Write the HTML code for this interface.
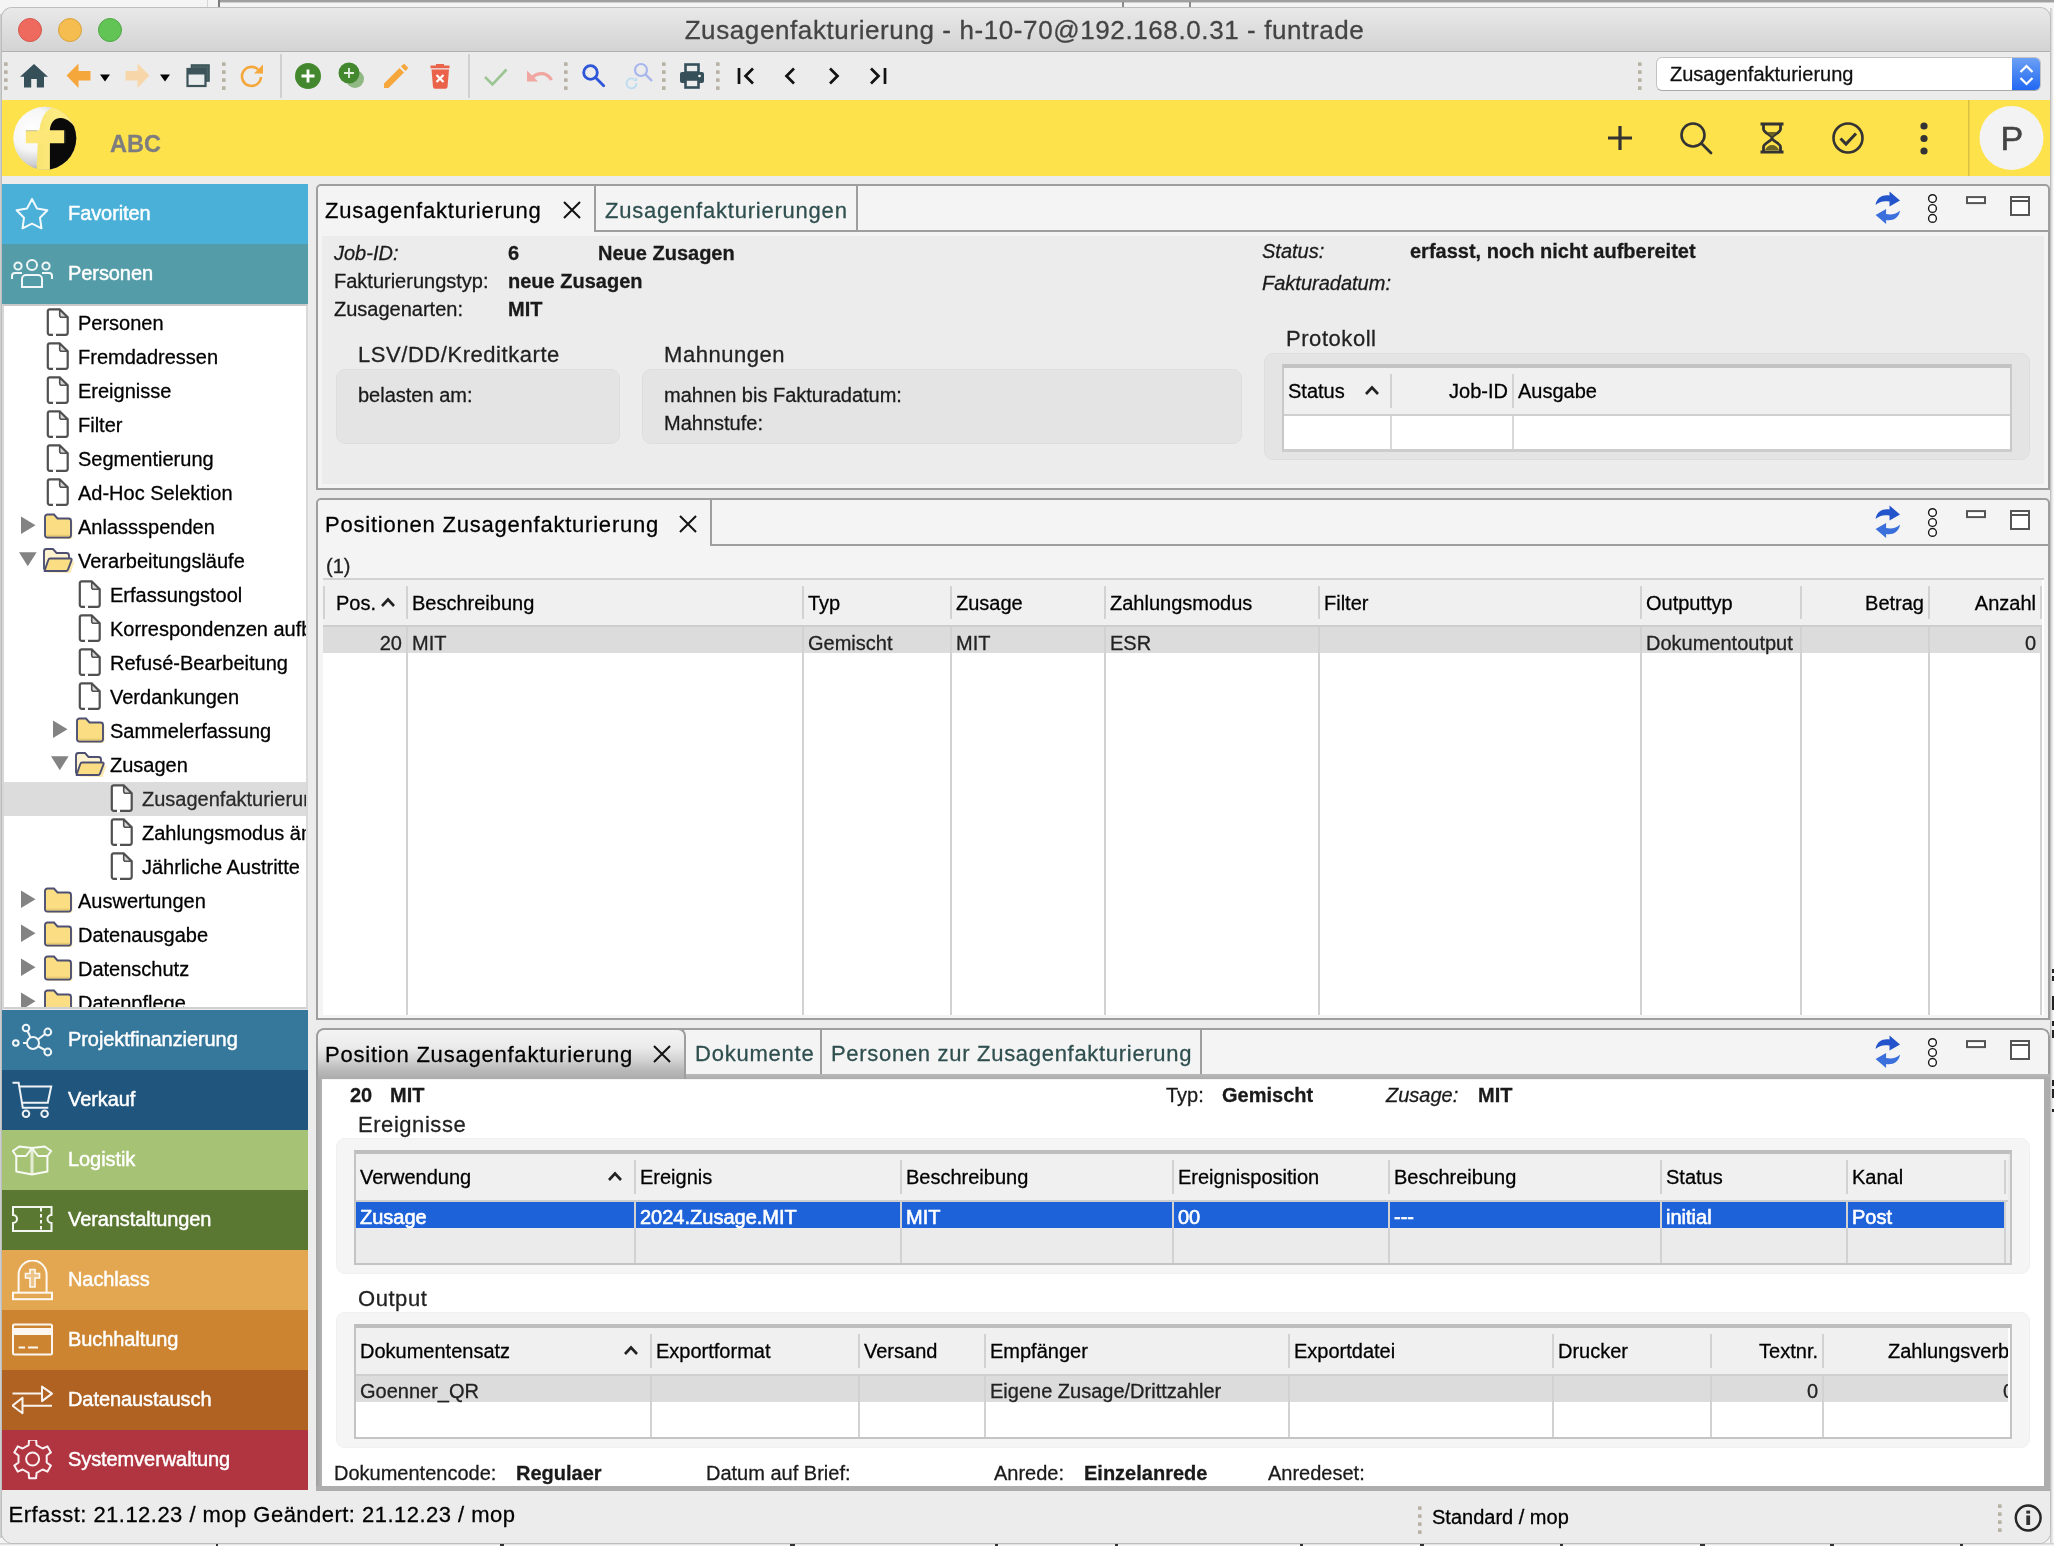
<!DOCTYPE html>
<html lang="de">
<head>
<meta charset="utf-8">
<title>Zusagenfakturierung</title>
<style>
*{box-sizing:border-box;margin:0;padding:0}
html,body{width:2054px;height:1546px;overflow:hidden;background:#f2f2f2}
body{position:relative;font-family:"Liberation Sans",sans-serif;font-size:20px;color:#000}
#desk{position:absolute;left:0;top:0;width:2054px;height:1546px;background:#f4f4f4}
#win{position:absolute;left:2px;top:8px;width:2048px;height:1535px;background:#ececec;border-radius:10px 10px 11px 11px;overflow:hidden}
#winb{position:absolute;left:1px;top:7px;width:2050px;height:1537px;border-radius:11px 11px 12px 12px;background:#bdbdbd}
#o{position:absolute;left:-2px;top:-8px;width:2054px;height:1546px;will-change:transform;-webkit-text-stroke:.28px}
#o div,#o span,#o svg{position:absolute}

/* title */
#title{left:2px;top:8px;width:2048px;height:44px;background:linear-gradient(#e9e9e9,#d3d3d3);border-bottom:1px solid #b1b1b1}
#title .t{left:-1.500px;width:2048px;top:7px;text-align:center;font-size:26px;color:#444;letter-spacing:.6px;white-space:nowrap}
.tl{top:10px;width:24px;height:24px;border-radius:12px}
#tool{left:2px;top:52px;width:2048px;height:48px;background:#ececec}
#banner{left:2px;top:100px;width:2048px;height:76px;background:#fde24b}
/* sidebar */
.nav{left:2px;width:306px;height:60px;color:#fff;font-size:20px;white-space:nowrap}
.nav span{left:66px;top:18px;-webkit-text-stroke:.45px #fff;letter-spacing:-.08px}
#tree{left:2px;top:304px;width:306px;height:705px;background:#fff;overflow:hidden;border-left:2px solid #d6d6d6;border-right:2px solid #d9d9d9;border-bottom:2px solid #d0d0d0;border-top:2px solid #cbc8c8}
.tr{left:-4px;height:34px;width:320px;white-space:nowrap;font-size:20px;line-height:34px}
.tr span{top:0}
.tr svg{top:0}
/* panels */
.panel{background:#f4f4f4;border:2px solid #9e9e9e;border-radius:5px 5px 0 0}
.tab{top:0;height:46px;white-space:nowrap;font-size:22px;letter-spacing:.78px;line-height:46px}
.lbl{white-space:nowrap;font-size:20px;line-height:28px;color:#1a1a1a}
.b{font-weight:bold}
.i{font-style:italic}
.gt{margin-top:1px;white-space:nowrap;font-size:22px;letter-spacing:.55px;color:#222;line-height:28px}
.grp{background:#e4e4e4;border:1px solid #dedede;border-radius:9px}
.th{white-space:nowrap;font-size:20px;line-height:28px;color:#000}
.td{white-space:nowrap;font-size:20px;line-height:26px;color:#222}
.vs{width:2px;background:#d2d2d2}
.r{text-align:right}
.w{color:#fff!important;-webkit-text-stroke:.6px #fff}
#status{left:2px;top:1491px;width:2048px;height:53px;background:#ececec}
</style>
</head>
<body>
<div id="desk">
 <div style="position:absolute;left:220px;top:0;width:1834px;height:2px;background:#9f9f9f"></div>
 <div style="position:absolute;left:220px;top:2px;width:1834px;height:1px;background:#d0d0d0"></div>
 <div style="position:absolute;left:207px;top:0;width:1px;height:8px;background:#d6d6d6"></div>
 <div style="position:absolute;left:218px;top:0;width:2px;height:8px;background:#7c7c7c"></div>
 <div style="position:absolute;left:1122px;top:2px;width:2px;height:5px;background:#8a8a8a"></div>
 <div style="position:absolute;left:1189px;top:2px;width:2px;height:5px;background:#8a8a8a"></div>
 <div style="position:absolute;left:0;top:14px;width:2px;height:1524px;background:#cbcfcf"></div>
 <div style="position:absolute;left:2050px;top:8px;width:4px;height:1538px;background:linear-gradient(90deg,#c6c6c6,#e9e9e9 60%,#fff)"></div>
 <div style="position:absolute;left:0;top:1543px;width:2054px;height:3px;background:linear-gradient(#c9c9c9,#fff)"></div>
 <div style="position:absolute;left:2051.500px;top:969px;width:2.500px;height:4px;background:#222"></div>
 <div style="position:absolute;left:2051.500px;top:976px;width:2.500px;height:5px;background:#222"></div>
 <div style="position:absolute;left:2051.500px;top:996px;width:2.500px;height:14px;background:#222"></div>
 <div style="position:absolute;left:2051.500px;top:1021px;width:2.500px;height:5px;background:#222"></div>
 <div style="position:absolute;left:2051.500px;top:1030px;width:2.500px;height:8px;background:#222"></div>
 <div style="position:absolute;left:2051.500px;top:1080px;width:2.500px;height:6px;background:#222"></div>
 <div style="position:absolute;left:2051.500px;top:1089px;width:2.500px;height:9px;background:#222"></div>
 <div style="position:absolute;left:2051.500px;top:1109px;width:2.500px;height:3px;background:#222"></div>
 <div style="position:absolute;left:216px;top:1544px;width:2px;height:2px;background:#333"></div>
 <div style="position:absolute;left:500px;top:1544px;width:4px;height:2px;background:#333"></div>
 <div style="position:absolute;left:790px;top:1544px;width:5px;height:2px;background:#333"></div>
 <div style="position:absolute;left:995px;top:1544px;width:3px;height:2px;background:#333"></div>
 <div style="position:absolute;left:1115px;top:1544px;width:3px;height:2px;background:#333"></div>
 <div style="position:absolute;left:1300px;top:1544px;width:3px;height:2px;background:#333"></div>
 <div style="position:absolute;left:1420px;top:1544px;width:4px;height:2px;background:#333"></div>
 <div style="position:absolute;left:1560px;top:1544px;width:3px;height:2px;background:#333"></div>
 <div style="position:absolute;left:1700px;top:1544px;width:5px;height:2px;background:#333"></div>
 <div style="position:absolute;left:1830px;top:1544px;width:4px;height:2px;background:#333"></div>
 <div style="position:absolute;left:1960px;top:1544px;width:3px;height:2px;background:#333"></div>
</div>
<div id="winb"></div>
<div id="win"><div id="o">
<!--TITLE-->
<div id="title">
 <div class="tl" style="left:16px;background:#ee6a5f;border:1px solid #d5564c"></div>
 <div class="tl" style="left:56px;background:#f5bd4f;border:1px solid #d9a33d"></div>
 <div class="tl" style="left:96px;background:#61c454;border:1px solid #50a846"></div>
 <div class="t">Zusagenfakturierung - h-10-70@192.168.0.31 - funtrade</div>
</div>
<div id="tool"></div>
<div id="banner"></div>
<!-- toolbar -->
<svg style="left:0;top:52px" width="2054" height="48" viewBox="0 52 2054 48">
 <defs>
  <g id="hdl"><rect x="0" y="0.300" width="3.600" height="3.600" fill="#b7b2a4"/><rect x="0" y="8.300" width="3.600" height="3.600" fill="#b7b2a4"/><rect x="0" y="16.300" width="3.600" height="3.600" fill="#b7b2a4"/><rect x="0" y="24.300" width="3.600" height="3.600" fill="#b7b2a4"/></g>
 </defs>
 <use href="#hdl" x="4" y="62"/>
 <!-- home -->
 <path d="M34 64l-14 12.700h4v10.800h7.200v-8.500h5.600v8.500h7.200v-10.800h4z" fill="#36505a"/>
 <!-- back -->
 <path d="M66.500 75.500l12-12v7.500h12v9.500h-12v7.500z" fill="#f5a73b"/>
 <path d="M100 74.500h10l-5 7z" fill="#000"/>
 <!-- forward -->
 <path d="M149.500 75.500l-12-12v7.500h-12v9.500h12v7.500z" fill="#f7d6a9"/>
 <path d="M160 74.500h10l-5 7z" fill="#000"/>
 <!-- windows -->
 <rect x="191.500" y="65" width="17.500" height="16" fill="#4a6166" stroke="#3c5459" stroke-width="1.600"/>
 <rect x="187.500" y="69" width="18" height="17" fill="#e8ecec" stroke="#3c5459" stroke-width="2.200"/>
 <rect x="187" y="68.500" width="19" height="6" fill="#3c5459"/>
 <use href="#hdl" x="222" y="62"/>
 <!-- refresh -->
 <path d="M261 77a9.500 9.500 0 1 1-3-7.500" fill="none" stroke="#f5a73b" stroke-width="2.600"/>
 <path d="M263 64.500v9h-9z" fill="#f5a73b"/>
 <rect x="280" y="54" width="2" height="44" fill="#d0d0d0"/>
 <!-- add -->
 <circle cx="308" cy="76" r="13" fill="#43882f"/>
 <path d="M308 69.500v13M301.500 76h13" stroke="#fff" stroke-width="2.800"/>
 <!-- add copy -->
 <circle cx="355" cy="79" r="9" fill="#8fb883"/>
 <circle cx="349" cy="73" r="10.500" fill="#43882f"/>
 <path d="M349 68v10M344 73h10" stroke="#e6f0e2" stroke-width="1.800"/>
 <!-- pencil -->
 <path d="M384 83.500l15.500-15.500 4.500 4.500-15.500 15.500h-4.500z" fill="#f5a73b"/>
 <path d="M401 66.500l2-2a1.500 1.500 0 0 1 2 0l2.500 2.500a1.500 1.500 0 0 1 0 2l-2 2z" fill="#f5a73b"/>
 <!-- trash -->
 <path d="M431.500 69.500h17.500l-1.500 17.500a2 2 0 0 1-2 1.800h-10.500a2 2 0 0 1-2-1.800z" fill="#ea6249"/>
 <path d="M430.500 65.500h19v2.800h-19zM436 64h8v2h-8z" fill="#ea6249"/>
 <path d="M436.500 75l7 7M443.500 75l-7 7" stroke="#fff" stroke-width="2.200"/>
 <rect x="468" y="54" width="2" height="44" fill="#d0d0d0"/>
 <!-- check -->
 <path d="M485 77l7.500 7.500 14-15" fill="none" stroke="#9cc594" stroke-width="2.600"/>
 <!-- undo -->
 <path d="M532 77.500c7-6 15-5 19.500 2.500" fill="none" stroke="#f0a6a1" stroke-width="3.400"/>
 <path d="M527 70.500v11h11z" fill="#f0a6a1"/>
 <use href="#hdl" x="564" y="62"/>
 <!-- search -->
 <circle cx="590.500" cy="72.500" r="6.800" fill="none" stroke="#2d55d8" stroke-width="2.800"/>
 <path d="M595.500 77.500l8.200 8.200" stroke="#2d55d8" stroke-width="2.800" stroke-linecap="round"/>
 <!-- search refresh -->
 <circle cx="641" cy="70" r="6" fill="none" stroke="#a7b6ec" stroke-width="2.200"/>
 <path d="M645.500 74.500l6.500 6.500" stroke="#a7b6ec" stroke-width="2.400"/>
 <path d="M636.500 83a5 5 0 1 1-2.500-4" fill="none" stroke="#bcdcf0" stroke-width="1.800"/>
 <path d="M637 77v4h-4z" fill="#bcdcf0"/>
 <use href="#hdl" x="662" y="62"/>
 <!-- printer -->
 <rect x="685.500" y="64.500" width="13" height="8" fill="#ececec" stroke="#36505a" stroke-width="2.600"/>
 <rect x="680" y="72" width="24" height="11" rx="2" fill="#36505a"/>
 <rect x="685.500" y="79.500" width="13" height="8" fill="#ececec" stroke="#36505a" stroke-width="2.600"/>
 <circle cx="699.500" cy="76" r="1.300" fill="#fff"/>
 <use href="#hdl" x="716" y="62"/>
 <!-- nav -->
 <path d="M739 68v16" stroke="#111" stroke-width="2.700"/><path d="M753 68.500l-7.500 7.500 7.500 7.500" fill="none" stroke="#111" stroke-width="2.700"/>
 <path d="M794 68.500l-7.500 7.500 7.500 7.500" fill="none" stroke="#111" stroke-width="2.700"/>
 <path d="M830 68.500l7.500 7.500-7.500 7.500" fill="none" stroke="#111" stroke-width="2.700"/>
 <path d="M871 68.500l7.500 7.500-7.500 7.500" fill="none" stroke="#111" stroke-width="2.700"/><path d="M885 68v16" stroke="#111" stroke-width="2.700"/>
 <use href="#hdl" x="1638" y="62"/>
</svg>
<div style="left:1656px;top:57px;width:385px;height:34px;background:#fff;border:1px solid #c3c3c3;border-bottom-color:#a9a9a9;border-radius:6px;overflow:hidden">
 <span style="left:13px;top:5px;font-size:20px;white-space:nowrap;color:#111">Zusagenfakturierung</span>
 <div style="right:-1px;top:-1px;width:29px;height:34px;background:linear-gradient(#6ea2f5,#1f66f2)"></div>
 <svg style="right:-1px;top:-0.500px" width="29" height="33" viewBox="0 0 29 33"><path d="M8.500 14l6-6 6 6M8.500 20l6 6 6-6" fill="none" stroke="#fff" stroke-width="2.200"/></svg>
</div>

<!-- banner -->
<svg style="left:10px;top:104px" width="70" height="70" viewBox="0 0 70 70">
 <defs>
  <radialGradient id="lg1" cx="30%" cy="36%" r="74%"><stop offset="0" stop-color="#fff"/><stop offset=".45" stop-color="#f6f6f6"/><stop offset=".75" stop-color="#cfcfcf"/><stop offset="1" stop-color="#8e8e8e"/></radialGradient>
  <linearGradient id="lg2" x1="0" x2="1" y1="0" y2="0"><stop offset="0" stop-color="#f7e46e"/><stop offset=".45" stop-color="#fdeb84"/><stop offset="1" stop-color="#fdea7c"/></linearGradient>
  <clipPath id="lc"><circle cx="34.800" cy="34.300" r="31.500"/></clipPath>
 </defs>
 <circle cx="34.800" cy="34.300" r="31.500" fill="url(#lg1)"/>
 <g clip-path="url(#lc)">
  <path d="M26.500 70L27.500 45C28.500 28 30 18 34 11C37 6.500 40 4.500 43 3L70 0V70Z" fill="url(#lg2)"/>
  <path d="M39.900 70V25C41 17 46 13.500 51 14C56 14.500 60 17 64 22L70 22V70Z" fill="#0a0a0a"/>
  <path d="M15.800 26.200h38.500v13.100h-38.500z" fill="#fde778"/>
  <path d="M15.800 26.700h11.500" stroke="#b9b9a8" stroke-width="1.200" opacity=".7"/>
  <path d="M54.800 27v12" stroke="#3a3a30" stroke-width="1.400" opacity=".8"/>
 </g>
</svg>
<span style="left:110px;top:131px;font-size:23.500px;font-weight:bold;color:#7d7d80;white-space:nowrap">ABC</span>
<svg style="left:1590px;top:100px" width="464" height="76" viewBox="1590 100 464 76">
 <path d="M1620 126v24M1608 138h24" stroke="#333" stroke-width="3.200"/>
 <circle cx="1693" cy="135" r="11.500" fill="none" stroke="#333" stroke-width="2.600"/><path d="M1701.500 143.500l9.500 9.500" stroke="#333" stroke-width="2.800" stroke-linecap="round"/>
 <path d="M1760.500 124h23M1760.500 152h23" stroke="#333" stroke-width="3.200"/>
 <path d="M1763.500 125v4c0 4 8.500 6 8.500 9s-8.500 5-8.500 9v4M1780.500 125v4c0 4-8.500 6-8.500 9s8.500 5 8.500 9v4" fill="none" stroke="#333" stroke-width="2.800"/>
 <path d="M1765 150c1-3 4-5 7-5s6 2 7 5z" fill="#6b6326"/>
 <path d="M1767 132h10l-5 5z" fill="#6b6326"/>
 <circle cx="1848" cy="138" r="14.500" fill="none" stroke="#333" stroke-width="2.600"/><path d="M1840.500 138.500l5.500 5.500 10-10.500" fill="none" stroke="#333" stroke-width="3"/>
 <circle cx="1924" cy="126" r="3.600" fill="#333"/><circle cx="1924" cy="138.500" r="3.600" fill="#333"/><circle cx="1924" cy="151" r="3.600" fill="#333"/>
 <rect x="1968" y="100" width="1.500" height="76" fill="#d9c23f"/>
 <circle cx="2011.500" cy="138" r="32" fill="#f3f3f3"/>
</svg>
<span style="left:2000.500px;top:119px;font-size:34px;color:#444;white-space:nowrap;-webkit-text-stroke:.6px #444">P</span>

<!-- sidebar -->
<div class="nav" style="top:184px;background:#4ab0d8"><svg style="left:10px;top:11.500px" width="40" height="40" viewBox="0 0 40 40" fill="none" stroke="#fff" stroke-width="2" stroke-linejoin="round"><path d="M20.0 3.0L24.9 12.4L35.4 14.2L28.0 21.8L29.5 32.3L20.0 27.6L10.5 32.3L12.0 21.8L4.6 14.2L15.1 12.4Z" opacity=".92"/></svg><span>Favoriten</span></div>
<div class="nav" style="top:244px;background:#549ca7"><svg style="left:8px;top:12px" width="44" height="38" viewBox="0 0 44 38" fill="none" stroke="#fff" stroke-width="2" opacity=".92"><circle cx="22" cy="9" r="5"/><circle cx="8" cy="10" r="3.6"/><circle cx="36" cy="10" r="3.6"/><path d="M12 31v-8a4 4 0 0 1 4-4h12a4 4 0 0 1 4 4v8z"/><path d="M2 23v-3a3 3 0 0 1 3-3h7M42 23v-3a3 3 0 0 0-3-3h-7"/></svg><span>Personen</span></div>
<div id="tree">
<div class="tr" style="top:0px"><svg style="left:46px;top:2px" width="26" height="31" viewBox="0 0 26 31"><path d="M3.800 1.300h9.900l8 8v15.500a2 2 0 0 1-2 2h-15.900a2 2 0 0 1-2-2v-21.500a2 2 0 0 1 2-2z" fill="#fff" stroke="#505050" stroke-width="2.200"/><path d="M13.700 1.800v5.500a2 2 0 0 0 2 2h5.500z" fill="#d6d6d6" stroke="#505050" stroke-width="1.600" stroke-linejoin="round"/><path d="M7 26.800h3" stroke="#fff" stroke-width="3"/></svg><span style="left:78px">Personen</span></div>
<div class="tr" style="top:34px"><svg style="left:46px;top:2px" width="26" height="31" viewBox="0 0 26 31"><path d="M3.800 1.300h9.900l8 8v15.500a2 2 0 0 1-2 2h-15.900a2 2 0 0 1-2-2v-21.500a2 2 0 0 1 2-2z" fill="#fff" stroke="#505050" stroke-width="2.200"/><path d="M13.700 1.800v5.500a2 2 0 0 0 2 2h5.500z" fill="#d6d6d6" stroke="#505050" stroke-width="1.600" stroke-linejoin="round"/><path d="M7 26.800h3" stroke="#fff" stroke-width="3"/></svg><span style="left:78px">Fremdadressen</span></div>
<div class="tr" style="top:68px"><svg style="left:46px;top:2px" width="26" height="31" viewBox="0 0 26 31"><path d="M3.800 1.300h9.900l8 8v15.500a2 2 0 0 1-2 2h-15.900a2 2 0 0 1-2-2v-21.500a2 2 0 0 1 2-2z" fill="#fff" stroke="#505050" stroke-width="2.200"/><path d="M13.700 1.800v5.500a2 2 0 0 0 2 2h5.500z" fill="#d6d6d6" stroke="#505050" stroke-width="1.600" stroke-linejoin="round"/><path d="M7 26.800h3" stroke="#fff" stroke-width="3"/></svg><span style="left:78px">Ereignisse</span></div>
<div class="tr" style="top:102px"><svg style="left:46px;top:2px" width="26" height="31" viewBox="0 0 26 31"><path d="M3.800 1.300h9.900l8 8v15.500a2 2 0 0 1-2 2h-15.900a2 2 0 0 1-2-2v-21.500a2 2 0 0 1 2-2z" fill="#fff" stroke="#505050" stroke-width="2.200"/><path d="M13.700 1.800v5.500a2 2 0 0 0 2 2h5.500z" fill="#d6d6d6" stroke="#505050" stroke-width="1.600" stroke-linejoin="round"/><path d="M7 26.800h3" stroke="#fff" stroke-width="3"/></svg><span style="left:78px">Filter</span></div>
<div class="tr" style="top:136px"><svg style="left:46px;top:2px" width="26" height="31" viewBox="0 0 26 31"><path d="M3.800 1.300h9.900l8 8v15.500a2 2 0 0 1-2 2h-15.900a2 2 0 0 1-2-2v-21.500a2 2 0 0 1 2-2z" fill="#fff" stroke="#505050" stroke-width="2.200"/><path d="M13.700 1.800v5.500a2 2 0 0 0 2 2h5.500z" fill="#d6d6d6" stroke="#505050" stroke-width="1.600" stroke-linejoin="round"/><path d="M7 26.800h3" stroke="#fff" stroke-width="3"/></svg><span style="left:78px">Segmentierung</span></div>
<div class="tr" style="top:170px"><svg style="left:46px;top:2px" width="26" height="31" viewBox="0 0 26 31"><path d="M3.800 1.300h9.900l8 8v15.500a2 2 0 0 1-2 2h-15.900a2 2 0 0 1-2-2v-21.500a2 2 0 0 1 2-2z" fill="#fff" stroke="#505050" stroke-width="2.200"/><path d="M13.700 1.800v5.500a2 2 0 0 0 2 2h5.500z" fill="#d6d6d6" stroke="#505050" stroke-width="1.600" stroke-linejoin="round"/><path d="M7 26.800h3" stroke="#fff" stroke-width="3"/></svg><span style="left:78px">Ad-Hoc Selektion</span></div>
<div class="tr" style="top:204px"><svg style="left:20px;top:6px" width="18" height="20" viewBox="0 0 18 20"><path d="M1 0.500l14.500 8.800-14.500 8.800z" fill="#838383"/></svg><svg style="left:43px;top:3px" width="32" height="30" viewBox="0 0 32 30"><path d="M3.500 5.500a2.500 2.500 0 0 1 2.500-2.500h6.500l3.500 4h11a2.500 2.500 0 0 1 2.500 2.500v14a2.500 2.500 0 0 1-2.500 2.500h-21a2.500 2.500 0 0 1-2.500-2.500z" fill="#fcebb3"/><path d="M2 4a2.500 2.500 0 0 1 2.500-2.500h6.500l3.500 4h11a2.500 2.500 0 0 1 2.500 2.500v14a2.500 2.500 0 0 1-2.500 2.500h-21a2.500 2.500 0 0 1-2.500-2.500z" fill="#fbde83" stroke="#4d5072" stroke-width="1.900"/><path d="M3.500 22.500h23" stroke="#e8c973" stroke-width="1.600"/></svg><span style="left:78px">Anlassspenden</span></div>
<div class="tr" style="top:238px"><svg style="left:18px;top:7px" width="20" height="18" viewBox="0 0 20 18"><path d="M1 1.200h17.600l-8.800 14z" fill="#838383"/></svg><svg style="left:42px;top:3px" width="34" height="30" viewBox="0 0 34 30"><path d="M4 24l4-11h23l-4 11.500z" fill="#fcebb3" transform="translate(1.500 1.500)"/><path d="M2 22.500v-18a2.500 2.500 0 0 1 2.500-2.500h6.500l3.500 4h10a2.500 2.500 0 0 1 2.500 2.500v3" fill="#fff3cf" stroke="#4d5072" stroke-width="1.900"/><path d="M2.500 24l3.800-11a2 2 0 0 1 1.900-1.500h20.300a1.200 1.200 0 0 1 1.100 1.700l-3.600 9.500a2 2 0 0 1-1.900 1.300z" fill="#fbde83" stroke="#4d5072" stroke-width="1.900" stroke-linejoin="round"/></svg><span style="left:78px">Verarbeitungsläufe</span></div>
<div class="tr" style="top:272px"><svg style="left:78px;top:2px" width="26" height="31" viewBox="0 0 26 31"><path d="M3.800 1.300h9.900l8 8v15.500a2 2 0 0 1-2 2h-15.900a2 2 0 0 1-2-2v-21.500a2 2 0 0 1 2-2z" fill="#fff" stroke="#505050" stroke-width="2.200"/><path d="M13.700 1.800v5.500a2 2 0 0 0 2 2h5.500z" fill="#d6d6d6" stroke="#505050" stroke-width="1.600" stroke-linejoin="round"/><path d="M7 26.800h3" stroke="#fff" stroke-width="3"/></svg><span style="left:110px">Erfassungstool</span></div>
<div class="tr" style="top:306px"><svg style="left:78px;top:2px" width="26" height="31" viewBox="0 0 26 31"><path d="M3.800 1.300h9.900l8 8v15.500a2 2 0 0 1-2 2h-15.900a2 2 0 0 1-2-2v-21.500a2 2 0 0 1 2-2z" fill="#fff" stroke="#505050" stroke-width="2.200"/><path d="M13.700 1.800v5.500a2 2 0 0 0 2 2h5.500z" fill="#d6d6d6" stroke="#505050" stroke-width="1.600" stroke-linejoin="round"/><path d="M7 26.800h3" stroke="#fff" stroke-width="3"/></svg><span style="left:110px">Korrespondenzen aufbereiten</span></div>
<div class="tr" style="top:340px"><svg style="left:78px;top:2px" width="26" height="31" viewBox="0 0 26 31"><path d="M3.800 1.300h9.900l8 8v15.500a2 2 0 0 1-2 2h-15.900a2 2 0 0 1-2-2v-21.500a2 2 0 0 1 2-2z" fill="#fff" stroke="#505050" stroke-width="2.200"/><path d="M13.700 1.800v5.500a2 2 0 0 0 2 2h5.500z" fill="#d6d6d6" stroke="#505050" stroke-width="1.600" stroke-linejoin="round"/><path d="M7 26.800h3" stroke="#fff" stroke-width="3"/></svg><span style="left:110px">Refusé-Bearbeitung</span></div>
<div class="tr" style="top:374px"><svg style="left:78px;top:2px" width="26" height="31" viewBox="0 0 26 31"><path d="M3.800 1.300h9.900l8 8v15.500a2 2 0 0 1-2 2h-15.900a2 2 0 0 1-2-2v-21.500a2 2 0 0 1 2-2z" fill="#fff" stroke="#505050" stroke-width="2.200"/><path d="M13.700 1.800v5.500a2 2 0 0 0 2 2h5.500z" fill="#d6d6d6" stroke="#505050" stroke-width="1.600" stroke-linejoin="round"/><path d="M7 26.800h3" stroke="#fff" stroke-width="3"/></svg><span style="left:110px">Verdankungen</span></div>
<div class="tr" style="top:408px"><svg style="left:52px;top:6px" width="18" height="20" viewBox="0 0 18 20"><path d="M1 0.500l14.500 8.800-14.500 8.800z" fill="#838383"/></svg><svg style="left:75px;top:3px" width="32" height="30" viewBox="0 0 32 30"><path d="M3.500 5.500a2.500 2.500 0 0 1 2.500-2.500h6.500l3.500 4h11a2.500 2.500 0 0 1 2.500 2.500v14a2.500 2.500 0 0 1-2.500 2.500h-21a2.500 2.500 0 0 1-2.500-2.500z" fill="#fcebb3"/><path d="M2 4a2.500 2.500 0 0 1 2.500-2.500h6.500l3.500 4h11a2.500 2.500 0 0 1 2.500 2.500v14a2.500 2.500 0 0 1-2.500 2.500h-21a2.500 2.500 0 0 1-2.500-2.500z" fill="#fbde83" stroke="#4d5072" stroke-width="1.900"/><path d="M3.500 22.500h23" stroke="#e8c973" stroke-width="1.600"/></svg><span style="left:110px">Sammelerfassung</span></div>
<div class="tr" style="top:442px"><svg style="left:50px;top:7px" width="20" height="18" viewBox="0 0 20 18"><path d="M1 1.200h17.600l-8.800 14z" fill="#838383"/></svg><svg style="left:74px;top:3px" width="34" height="30" viewBox="0 0 34 30"><path d="M4 24l4-11h23l-4 11.500z" fill="#fcebb3" transform="translate(1.500 1.500)"/><path d="M2 22.500v-18a2.500 2.500 0 0 1 2.500-2.500h6.500l3.500 4h10a2.500 2.500 0 0 1 2.500 2.500v3" fill="#fff3cf" stroke="#4d5072" stroke-width="1.900"/><path d="M2.500 24l3.800-11a2 2 0 0 1 1.900-1.500h20.300a1.200 1.200 0 0 1 1.100 1.700l-3.600 9.500a2 2 0 0 1-1.900 1.300z" fill="#fbde83" stroke="#4d5072" stroke-width="1.900" stroke-linejoin="round"/></svg><span style="left:110px">Zusagen</span></div>
<div class="tr" style="top:476px;background:#dcdcdc"><svg style="left:110px;top:2px" width="26" height="31" viewBox="0 0 26 31"><path d="M3.800 1.300h9.900l8 8v15.500a2 2 0 0 1-2 2h-15.900a2 2 0 0 1-2-2v-21.500a2 2 0 0 1 2-2z" fill="#fff" stroke="#505050" stroke-width="2.200"/><path d="M13.700 1.800v5.500a2 2 0 0 0 2 2h5.500z" fill="#d6d6d6" stroke="#505050" stroke-width="1.600" stroke-linejoin="round"/><path d="M7 26.800h3" stroke="#fff" stroke-width="3"/></svg><span style="left:142px;color:#2a2a2a">Zusagenfakturierung</span></div>
<div class="tr" style="top:510px"><svg style="left:110px;top:2px" width="26" height="31" viewBox="0 0 26 31"><path d="M3.800 1.300h9.900l8 8v15.500a2 2 0 0 1-2 2h-15.900a2 2 0 0 1-2-2v-21.500a2 2 0 0 1 2-2z" fill="#fff" stroke="#505050" stroke-width="2.200"/><path d="M13.700 1.800v5.500a2 2 0 0 0 2 2h5.500z" fill="#d6d6d6" stroke="#505050" stroke-width="1.600" stroke-linejoin="round"/><path d="M7 26.800h3" stroke="#fff" stroke-width="3"/></svg><span style="left:142px">Zahlungsmodus ändern</span></div>
<div class="tr" style="top:544px"><svg style="left:110px;top:2px" width="26" height="31" viewBox="0 0 26 31"><path d="M3.800 1.300h9.900l8 8v15.500a2 2 0 0 1-2 2h-15.900a2 2 0 0 1-2-2v-21.500a2 2 0 0 1 2-2z" fill="#fff" stroke="#505050" stroke-width="2.200"/><path d="M13.700 1.800v5.500a2 2 0 0 0 2 2h5.500z" fill="#d6d6d6" stroke="#505050" stroke-width="1.600" stroke-linejoin="round"/><path d="M7 26.800h3" stroke="#fff" stroke-width="3"/></svg><span style="left:142px">Jährliche Austritte</span></div>
<div class="tr" style="top:578px"><svg style="left:20px;top:6px" width="18" height="20" viewBox="0 0 18 20"><path d="M1 0.500l14.500 8.800-14.500 8.800z" fill="#838383"/></svg><svg style="left:43px;top:3px" width="32" height="30" viewBox="0 0 32 30"><path d="M3.500 5.500a2.500 2.500 0 0 1 2.500-2.500h6.500l3.500 4h11a2.500 2.500 0 0 1 2.500 2.500v14a2.500 2.500 0 0 1-2.500 2.500h-21a2.500 2.500 0 0 1-2.500-2.500z" fill="#fcebb3"/><path d="M2 4a2.500 2.500 0 0 1 2.500-2.500h6.500l3.500 4h11a2.500 2.500 0 0 1 2.500 2.500v14a2.500 2.500 0 0 1-2.500 2.500h-21a2.500 2.500 0 0 1-2.500-2.500z" fill="#fbde83" stroke="#4d5072" stroke-width="1.900"/><path d="M3.500 22.500h23" stroke="#e8c973" stroke-width="1.600"/></svg><span style="left:78px">Auswertungen</span></div>
<div class="tr" style="top:612px"><svg style="left:20px;top:6px" width="18" height="20" viewBox="0 0 18 20"><path d="M1 0.500l14.500 8.800-14.500 8.800z" fill="#838383"/></svg><svg style="left:43px;top:3px" width="32" height="30" viewBox="0 0 32 30"><path d="M3.500 5.500a2.500 2.500 0 0 1 2.500-2.500h6.500l3.500 4h11a2.500 2.500 0 0 1 2.500 2.500v14a2.500 2.500 0 0 1-2.500 2.500h-21a2.500 2.500 0 0 1-2.500-2.500z" fill="#fcebb3"/><path d="M2 4a2.500 2.500 0 0 1 2.500-2.500h6.500l3.500 4h11a2.500 2.500 0 0 1 2.500 2.500v14a2.500 2.500 0 0 1-2.500 2.500h-21a2.500 2.500 0 0 1-2.500-2.500z" fill="#fbde83" stroke="#4d5072" stroke-width="1.900"/><path d="M3.500 22.500h23" stroke="#e8c973" stroke-width="1.600"/></svg><span style="left:78px">Datenausgabe</span></div>
<div class="tr" style="top:646px"><svg style="left:20px;top:6px" width="18" height="20" viewBox="0 0 18 20"><path d="M1 0.500l14.500 8.800-14.500 8.800z" fill="#838383"/></svg><svg style="left:43px;top:3px" width="32" height="30" viewBox="0 0 32 30"><path d="M3.500 5.500a2.500 2.500 0 0 1 2.500-2.500h6.500l3.500 4h11a2.500 2.500 0 0 1 2.500 2.500v14a2.500 2.500 0 0 1-2.500 2.500h-21a2.500 2.500 0 0 1-2.500-2.500z" fill="#fcebb3"/><path d="M2 4a2.500 2.500 0 0 1 2.500-2.500h6.500l3.500 4h11a2.500 2.500 0 0 1 2.500 2.500v14a2.500 2.500 0 0 1-2.500 2.500h-21a2.500 2.500 0 0 1-2.500-2.500z" fill="#fbde83" stroke="#4d5072" stroke-width="1.900"/><path d="M3.500 22.500h23" stroke="#e8c973" stroke-width="1.600"/></svg><span style="left:78px">Datenschutz</span></div>
<div class="tr" style="top:680px"><svg style="left:20px;top:6px" width="18" height="20" viewBox="0 0 18 20"><path d="M1 0.500l14.500 8.800-14.500 8.800z" fill="#838383"/></svg><svg style="left:43px;top:3px" width="32" height="30" viewBox="0 0 32 30"><path d="M3.500 5.500a2.500 2.500 0 0 1 2.500-2.500h6.500l3.500 4h11a2.500 2.500 0 0 1 2.500 2.500v14a2.500 2.500 0 0 1-2.500 2.500h-21a2.500 2.500 0 0 1-2.500-2.500z" fill="#fcebb3"/><path d="M2 4a2.500 2.500 0 0 1 2.500-2.500h6.500l3.500 4h11a2.500 2.500 0 0 1 2.500 2.500v14a2.500 2.500 0 0 1-2.500 2.500h-21a2.500 2.500 0 0 1-2.500-2.500z" fill="#fbde83" stroke="#4d5072" stroke-width="1.900"/><path d="M3.500 22.500h23" stroke="#e8c973" stroke-width="1.600"/></svg><span style="left:78px">Datenpflege</span></div>
</div>
<div class="nav" style="top:1010px;background:#36789b"><svg style="left:10px;top:10px" width="41" height="41" viewBox="0 0 41 41" fill="none" stroke="#fff" stroke-width="2" opacity=".93" ><circle cx="21" cy="23" r="6"/><circle cx="14" cy="8" r="3.300"/><circle cx="35.800" cy="12" r="3.400"/><circle cx="3.800" cy="23" r="2.800"/><circle cx="35.800" cy="32" r="3.400"/><path d="M18.500 17.500l-3-6.500M26 19.500l7-5.500M15 23h-4M26.500 26.500l6.500 3.500"/></svg><span>Projektfinanzierung</span></div>
<div class="nav" style="top:1070px;background:#20567e"><svg style="left:10px;top:10px" width="41" height="41" viewBox="0 0 41 41" fill="none" stroke="#fff" stroke-width="2" opacity=".93" ><path d="M0.500 2.700h6.100l4.200 25.100h25.500M7.400 6.400h31.800l-3.400 16.300h-25.300"/><circle cx="14" cy="33.700" r="3.300"/><circle cx="32.600" cy="33.700" r="3.300"/></svg><span>Verkauf</span></div>
<div class="nav" style="top:1130px;background:#a6c274"><svg style="left:10px;top:10px" width="41" height="41" viewBox="0 0 41 41" fill="none" stroke="#fff" stroke-width="2" opacity=".93" stroke-linejoin="round"><path d="M4.300 16v15.500l15.700 3 15.400-3v-15.500"/><path d="M4.300 16l-3.500-5 6.500-4.500 12.700 1.500 12.700-1.500 6.500 4.500-3.800 5"/><path d="M4.300 16h9.700l6-8 6 8h9.400"/><path d="M20 8.500v26" stroke-width="3" opacity=".75"/></svg><span>Logistik</span></div>
<div class="nav" style="top:1190px;background:#5b7833"><svg style="left:10px;top:10px" width="41" height="41" viewBox="0 0 41 41" fill="none" stroke="#fff" stroke-width="2" opacity=".93" ><path d="M1 7h38.500v8a4 4 0 0 0 0 8v8h-38.500v-8a4 4 0 0 0 0-8z"/><path d="M29 8v23" stroke-dasharray="3.500 2.500"/></svg><span>Veranstaltungen</span></div>
<div class="nav" style="top:1250px;background:#e3a751"><svg style="left:10px;top:10px" width="41" height="41" viewBox="0 0 41 41" fill="none" stroke="#fff" stroke-width="2" opacity=".93" ><path d="M6.600 32.700v-18.200a14 14 0 0 1 28 0v18.200"/><rect x="1" y="32.700" width="39" height="6.500"/><path d="M18 9.500h5v4h4.500v4.500h-4.500v9h-5v-9h-4.500v-4.500h4.500z" stroke-width="1.600" fill="rgba(255,255,255,.35)"/></svg><span>Nachlass</span></div>
<div class="nav" style="top:1310px;background:#cd8430"><svg style="left:10px;top:10px" width="41" height="41" viewBox="0 0 41 41" fill="none" stroke="#fff" stroke-width="2" opacity=".93" ><rect x="1" y="4.500" width="39" height="30" rx="1.500"/><rect x="1.500" y="8" width="38" height="7" fill="#fff" stroke="none"/><path d="M6.600 27.400h6.500M16 27.400h10" /></svg><span>Buchhaltung</span></div>
<div class="nav" style="top:1370px;background:#af6222"><svg style="left:10px;top:10px" width="41" height="41" viewBox="0 0 41 41" fill="none" stroke="#fff" stroke-width="2" opacity=".93" ><path d="M0.500 13.600h29.500M30 6.600l10 7-10 7.500zM40 25.700h-29.500M10.500 17.700l-10 8 10 7.500z" stroke-linejoin="round"/></svg><span>Datenaustausch</span></div>
<div class="nav" style="top:1430px;background:#b03541"><svg style="left:10px;top:10px" width="41" height="41" viewBox="0 0 41 41" fill="none" stroke="#fff" stroke-width="2" opacity=".93" ><circle cx="20.600" cy="19" r="6.500"/><path d="M16.6 5.1 L17.1 -0.2 L24.1 -0.2 L24.6 5.1 L30.6 8.5 L35.5 6.4 L38.9 12.4 L34.7 15.5 L34.7 22.5 L38.9 25.6 L35.5 31.6 L30.6 29.5 L24.6 32.9 L24.1 38.2 L17.1 38.2 L16.6 32.9 L10.6 29.5 L5.7 31.6 L2.3 25.6 L6.5 22.5 L6.5 15.5 L2.3 12.4 L5.7 6.4 L10.6 8.5Z" stroke-linejoin="round"/></svg><span>Systemverwaltung</span></div>

<!-- panel 1 -->
<div class="panel" style="left:316px;top:184px;width:1734px;height:306px;background:#f4f4f4">
 <div style="left:0;top:44px;width:1730px;height:2px;background:#9e9e9e"></div>
 <div style="left:4px;top:50px;width:1722px;height:248px;background:#ececec"></div>
 <div style="left:276px;top:0;width:2px;height:46px;background:#9e9e9e"></div>
 <div class="tab" style="left:0;width:276px;height:48px;background:#f4f4f4;border-radius:4px 0 0 0"><span style="left:7px;top:2px">Zusagenfakturierung</span>
  <svg style="left:244px;top:14px" width="20" height="20" viewBox="0 0 20 20"><path d="M2 2l16 16M18 2l-16 16" stroke="#111" stroke-width="2"/></svg></div>
 <div class="tab" style="left:278px;width:262px;border-right:2px solid #9e9e9e;color:#2f4f4f"><span style="left:9px;top:2px">Zusagenfakturierungen</span></div>
 <svg class="picons" style="left:1540px;top:2px" width="180" height="44" viewBox="0 0 180 44"><use href="#picons"/></svg>
</div>
<svg style="left:0;top:0" width="0" height="0"><defs>
 <g id="picons">
  <path d="M17.500 17C19 9 25 6.500 31.500 7.500L31.500 3.500 42 12.500 31.500 18.500 31.500 13.500C26 12.500 21 13.500 17.500 17Z" fill="#2454cb"/>
  <path d="M42.100 22.600C40.600 30.600 34.600 33.100 28.100 32.100L28.100 36.100 17.600 27.100 28.100 21.100 28.100 26.100C33.600 27.100 38.600 26.100 42.100 22.600Z" fill="#3a6fdc"/>
  <circle cx="74.500" cy="10.600" r="3.900" fill="#fff" stroke="#1a1a1a" stroke-width="1.400"/><circle cx="74.500" cy="20.500" r="3.900" fill="#fff" stroke="#1a1a1a" stroke-width="1.400"/><circle cx="74.500" cy="30.400" r="3.900" fill="#fff" stroke="#1a1a1a" stroke-width="1.400"/>
  <rect x="109" y="9.100" width="18" height="6" fill="#fff" stroke="#555" stroke-width="2"/>
  <rect x="153" y="9" width="18" height="18" fill="#fff" stroke="#555" stroke-width="2"/><path d="M153 13h18" stroke="#555" stroke-width="2"/>
 </g></defs></svg>
<span class="lbl i" style="left:334px;top:239px">Job-ID:</span>
<span class="lbl b" style="left:508px;top:239px">6</span>
<span class="lbl b" style="left:598px;top:239px">Neue Zusagen</span>
<span class="lbl" style="left:334px;top:267px">Fakturierungstyp:</span>
<span class="lbl b" style="left:508px;top:267px">neue Zusagen</span>
<span class="lbl" style="left:334px;top:295px">Zusagenarten:</span>
<span class="lbl b" style="left:508px;top:295px">MIT</span>
<span class="lbl i" style="left:1262px;top:237px">Status:</span>
<span class="lbl b" style="left:1410px;top:237px">erfasst, noch nicht aufbereitet</span>
<span class="lbl i" style="left:1262px;top:269px">Fakturadatum:</span>
<span class="gt" style="left:358px;top:340px">LSV/DD/Kreditkarte</span>
<div class="grp" style="left:336px;top:369px;width:284px;height:75px"></div>
<span class="lbl" style="left:358px;top:381px">belasten am:</span>
<span class="gt" style="left:664px;top:340px">Mahnungen</span>
<div class="grp" style="left:642px;top:369px;width:600px;height:75px"></div>
<span class="lbl" style="left:664px;top:381px">mahnen bis Fakturadatum:</span>
<span class="lbl" style="left:664px;top:409px">Mahnstufe:</span>
<span class="gt" style="left:1286px;top:324px">Protokoll</span>
<div class="grp" style="left:1264px;top:353px;width:766px;height:107px"></div>
<div style="left:1282px;top:364px;width:730px;height:88px;background:#fff;border:2px solid #c9c9c9;border-top:4px solid #c3c3c3;border-bottom:3px solid #cdcdcd">
 <div style="left:0;top:0;width:726px;height:48px;background:#f0f0f0;border-bottom:2px solid #cfcfcf"></div>
 <div class="vs" style="left:106px;top:6px;height:34px"></div><div class="vs" style="left:228px;top:6px;height:34px"></div>
 <div class="vs" style="left:106px;top:48px;height:33px;background:#d9d9d9"></div><div class="vs" style="left:228px;top:48px;height:33px;background:#d9d9d9"></div>
 <span class="th" style="left:4px;top:9px">Status</span>
 <svg style="left:80px;top:16px" width="16" height="12" viewBox="0 0 16 12"><path d="M2 10l6-6.500 6 6.500" fill="none" stroke="#222" stroke-width="2.600"/></svg>
 <span class="th r" style="left:108px;top:9px;width:116px">Job-ID</span>
 <span class="th" style="left:234px;top:9px">Ausgabe</span>
</div>

<!-- panel 2 -->
<div class="panel" style="left:316px;top:498px;width:1734px;height:522px;background:#f4f4f4">
 <div style="left:0;top:44px;width:1730px;height:2px;background:#9e9e9e"></div>
 <div style="left:392px;top:0;width:2px;height:46px;background:#9e9e9e"></div>
 <div class="tab" style="left:0;width:392px;height:48px;background:#f4f4f4;border-radius:4px 0 0 0"><span style="left:7px;top:2px">Positionen Zusagenfakturierung</span>
  <svg style="left:360px;top:14px" width="20" height="20" viewBox="0 0 20 20"><path d="M2 2l16 16M18 2l-16 16" stroke="#111" stroke-width="2"/></svg></div>
 <svg style="left:1540px;top:2px" width="180" height="44" viewBox="0 0 180 44"><use href="#picons"/></svg>
</div>
<span class="lbl" style="left:326px;top:552px;color:#222">(1)</span>
<div style="left:323px;top:578px;width:1721px;height:437px;background:#fff;border-top:2px solid #d2d2d2">
 <div style="left:0;top:0;width:1719px;height:47px;background:#f0f0f0;border-bottom:2px solid #cdcdcd"></div>
 <div style="left:0;top:47px;width:1719px;height:26px;background:#dcdcdc"></div>
</div>
<div class="vs" style="left:323px;top:586px;height:33px"></div>
<div class="vs" style="left:406px;top:586px;height:33px"></div><div class="vs" style="left:406px;top:627px;height:388px"></div>
<div class="vs" style="left:802px;top:586px;height:33px"></div><div class="vs" style="left:802px;top:627px;height:388px"></div>
<div class="vs" style="left:950px;top:586px;height:33px"></div><div class="vs" style="left:950px;top:627px;height:388px"></div>
<div class="vs" style="left:1104px;top:586px;height:33px"></div><div class="vs" style="left:1104px;top:627px;height:388px"></div>
<div class="vs" style="left:1318px;top:586px;height:33px"></div><div class="vs" style="left:1318px;top:627px;height:388px"></div>
<div class="vs" style="left:1640px;top:586px;height:33px"></div><div class="vs" style="left:1640px;top:627px;height:388px"></div>
<div class="vs" style="left:1800px;top:586px;height:33px"></div><div class="vs" style="left:1800px;top:627px;height:388px"></div>
<div class="vs" style="left:1928px;top:586px;height:33px"></div><div class="vs" style="left:1928px;top:627px;height:388px"></div>
<div class="vs" style="left:2040px;top:586px;height:33px"></div><div class="vs" style="left:2040px;top:627px;height:388px"></div>
<span class="th" style="left:336px;top:589px">Pos.</span>
<svg style="left:380px;top:596px" width="16" height="12" viewBox="0 0 16 12"><path d="M2 10l6-6.500 6 6.500" fill="none" stroke="#222" stroke-width="2.600"/></svg>
<span class="th" style="left:412px;top:589px">Beschreibung</span>
<span class="th" style="left:808px;top:589px">Typ</span>
<span class="th" style="left:956px;top:589px">Zusage</span>
<span class="th" style="left:1110px;top:589px">Zahlungsmodus</span>
<span class="th" style="left:1324px;top:589px">Filter</span>
<span class="th" style="left:1646px;top:589px">Outputtyp</span>
<span class="th r" style="left:1804px;top:589px;width:120px">Betrag</span>
<span class="th r" style="left:1932px;top:589px;width:104px">Anzahl</span>
<span class="td r" style="left:326px;top:630px;width:76px">20</span>
<span class="td" style="left:412px;top:630px">MIT</span>
<span class="td" style="left:808px;top:630px">Gemischt</span>
<span class="td" style="left:956px;top:630px">MIT</span>
<span class="td" style="left:1110px;top:630px">ESR</span>
<span class="td" style="left:1646px;top:630px">Dokumentoutput</span>
<span class="td r" style="left:1932px;top:630px;width:104px">0</span>

<!-- panel 3 -->
<div class="panel" style="left:316px;top:1028px;width:1734px;height:464px;background:#fff;border:none;border-radius:8px 8px 0 0;overflow:hidden">
 <div style="left:0;top:0;width:1734px;height:52px;background:#f4f4f4;border:2px solid #9e9e9e;border-bottom:none;border-radius:8px 8px 0 0"></div>
 <div style="left:0;top:46px;width:1734px;height:5px;background:linear-gradient(#b9b9b9,#acacac)"></div>
 <div class="tab" style="left:0;top:0;width:370px;height:51px;background:linear-gradient(#f3f3f3 4%,#ebebeb 35%,#d4d4d4 60%,#b9b9b9 82%,#acacac 100%);border:2px solid #9e9e9e;border-bottom:none;border-radius:8px 8px 0 0"><span style="left:7px;top:2px">Position Zusagenfakturierung</span>
  <svg style="left:334px;top:14px" width="20" height="20" viewBox="0 0 20 20"><path d="M2 2l16 16M18 2l-16 16" stroke="#111" stroke-width="2"/></svg></div>
 <div class="tab" style="left:370px;top:2px;width:136px;height:44px;border-right:2px solid #9e9e9e;color:#2f4f4f"><span style="left:9px;top:1px">Dokumente</span></div>
 <div class="tab" style="left:506px;top:2px;width:380px;height:44px;border-right:2px solid #9e9e9e;color:#2f4f4f;letter-spacing:.7px"><span style="left:9px;top:1px">Personen zur Zusagenfakturierung</span></div>
 <svg style="left:1542px;top:4px" width="180" height="44" viewBox="0 0 180 44"><use href="#picons"/></svg>
 <div style="left:0;top:51px;width:6px;height:412px;background:linear-gradient(90deg,#a0a0a0,#b3b3b3)"></div>
 <div style="left:1728px;top:51px;width:6px;height:412px;background:#adadad"></div>
 <div style="left:0;top:458px;width:1734px;height:6px;background:#adadad"></div>
</div>
<span class="lbl b" style="left:350px;top:1081px">20</span>
<span class="lbl b" style="left:390px;top:1081px">MIT</span>
<span class="lbl" style="left:1166px;top:1081px">Typ:</span>
<span class="lbl b" style="left:1222px;top:1081px">Gemischt</span>
<span class="lbl i" style="left:1386px;top:1081px">Zusage:</span>
<span class="lbl b" style="left:1478px;top:1081px">MIT</span>
<span class="gt" style="left:358px;top:1110px">Ereignisse</span>
<div class="grp" style="left:336px;top:1138px;width:1694px;height:136px;background:#f5f5f5;border-color:#f0f0f0"></div>
<div style="left:354px;top:1150px;width:1658px;height:115px;background:#ebebeb;border:2px solid #c4c4c4;border-top:4px solid #bebebe">
 <div style="left:0;top:0;width:1652px;height:48px;background:#f0f0f0;border-bottom:2px solid #cfcfcf"></div>
 <div style="left:0;top:48px;width:1648px;height:26px;background:#1e62d9"></div>
</div>
<div class="vs" style="left:634px;top:1160px;height:34px"></div><div class="vs" style="left:634px;top:1202px;height:61px"></div>
<div class="vs" style="left:900px;top:1160px;height:34px"></div><div class="vs" style="left:900px;top:1202px;height:61px"></div>
<div class="vs" style="left:1172px;top:1160px;height:34px"></div><div class="vs" style="left:1172px;top:1202px;height:61px"></div>
<div class="vs" style="left:1388px;top:1160px;height:34px"></div><div class="vs" style="left:1388px;top:1202px;height:61px"></div>
<div class="vs" style="left:1660px;top:1160px;height:34px"></div><div class="vs" style="left:1660px;top:1202px;height:61px"></div>
<div class="vs" style="left:1846px;top:1160px;height:34px"></div><div class="vs" style="left:1846px;top:1202px;height:61px"></div>
<div class="vs" style="left:2004px;top:1160px;height:34px"></div><div class="vs" style="left:2004px;top:1202px;height:61px"></div>
<span class="th" style="left:360px;top:1163px">Verwendung</span>
<svg style="left:607px;top:1170px" width="16" height="12" viewBox="0 0 16 12"><path d="M2 10l6-6.500 6 6.500" fill="none" stroke="#222" stroke-width="2.600"/></svg>
<span class="th" style="left:640px;top:1163px">Ereignis</span>
<span class="th" style="left:906px;top:1163px">Beschreibung</span>
<span class="th" style="left:1178px;top:1163px">Ereignisposition</span>
<span class="th" style="left:1394px;top:1163px">Beschreibung</span>
<span class="th" style="left:1666px;top:1163px">Status</span>
<span class="th" style="left:1852px;top:1163px">Kanal</span>
<span class="td w" style="left:360px;top:1204px">Zusage</span>
<span class="td w" style="left:640px;top:1204px">2024.Zusage.MIT</span>
<span class="td w" style="left:906px;top:1204px">MIT</span>
<span class="td w" style="left:1178px;top:1204px">00</span>
<span class="td w" style="left:1394px;top:1204px">---</span>
<span class="td w" style="left:1666px;top:1204px">initial</span>
<span class="td w" style="left:1852px;top:1204px">Post</span>
<span class="gt" style="left:358px;top:1284px">Output</span>
<div class="grp" style="left:336px;top:1312px;width:1694px;height:136px;background:#f5f5f5;border-color:#f0f0f0"></div>
<div style="left:354px;top:1324px;width:1658px;height:115px;background:#fff;border:2px solid #c4c4c4;border-top:4px solid #bebebe">
 <div style="left:0;top:0;width:1652px;height:48px;background:#f0f0f0;border-bottom:2px solid #cfcfcf"></div>
 <div style="left:0;top:48px;width:1652px;height:26px;background:#dcdcdc"></div>
</div>
<div class="vs" style="left:650px;top:1334px;height:34px"></div><div class="vs" style="left:650px;top:1376px;height:61px"></div>
<div class="vs" style="left:858px;top:1334px;height:34px"></div><div class="vs" style="left:858px;top:1376px;height:61px"></div>
<div class="vs" style="left:984px;top:1334px;height:34px"></div><div class="vs" style="left:984px;top:1376px;height:61px"></div>
<div class="vs" style="left:1288px;top:1334px;height:34px"></div><div class="vs" style="left:1288px;top:1376px;height:61px"></div>
<div class="vs" style="left:1552px;top:1334px;height:34px"></div><div class="vs" style="left:1552px;top:1376px;height:61px"></div>
<div class="vs" style="left:1710px;top:1334px;height:34px"></div><div class="vs" style="left:1710px;top:1376px;height:61px"></div>
<div class="vs" style="left:1822px;top:1334px;height:34px"></div><div class="vs" style="left:1822px;top:1376px;height:61px"></div>
<span class="th" style="left:360px;top:1337px">Dokumentensatz</span>
<svg style="left:623px;top:1344px" width="16" height="12" viewBox="0 0 16 12"><path d="M2 10l6-6.500 6 6.500" fill="none" stroke="#222" stroke-width="2.600"/></svg>
<span class="th" style="left:656px;top:1337px">Exportformat</span>
<span class="th" style="left:864px;top:1337px">Versand</span>
<span class="th" style="left:990px;top:1337px">Empfänger</span>
<span class="th" style="left:1294px;top:1337px">Exportdatei</span>
<span class="th" style="left:1558px;top:1337px">Drucker</span>
<span class="th r" style="left:1714px;top:1337px;width:104px">Textnr.</span>
<div style="left:1826px;top:1330px;width:182px;height:40px;overflow:hidden"><span class="th" style="left:62px;top:7px">Zahlungsverbindung</span></div>
<span class="td" style="left:360px;top:1378px">Goenner_QR</span>
<span class="td" style="left:990px;top:1378px">Eigene Zusage/Drittzahler</span>
<span class="td r" style="left:1714px;top:1378px;width:104px">0</span>
<div style="left:1826px;top:1376px;width:182px;height:26px;overflow:hidden"><span class="td" style="left:177px;top:2px">0</span></div>
<span class="lbl" style="left:334px;top:1459px">Dokumentencode:</span>
<span class="lbl b" style="left:516px;top:1459px">Regulaer</span>
<span class="lbl" style="left:706px;top:1459px">Datum auf Brief:</span>
<span class="lbl" style="left:994px;top:1459px">Anrede:</span>
<span class="lbl b" style="left:1084px;top:1459px">Einzelanrede</span>
<span class="lbl" style="left:1268px;top:1459px">Anredeset:</span>

<div id="status"></div>
<!-- status -->
<span style="left:8.500px;top:1502px;font-size:22px;letter-spacing:.47px;white-space:nowrap;color:#000">Erfasst: 21.12.23 / mop Geändert: 21.12.23 / mop</span>
<svg style="left:1410px;top:1501px" width="20" height="40" viewBox="0 0 20 40"><use href="#hdl" x="8" y="5"/></svg>
<span style="left:1432px;top:1506px;font-size:20px;white-space:nowrap;color:#000">Standard / mop</span>
<svg style="left:1990px;top:1500px" width="60" height="40" viewBox="0 0 60 40"><use href="#hdl" x="8" y="4"/>
 <circle cx="38.200" cy="18" r="12.400" fill="none" stroke="#262626" stroke-width="2.500"/><rect x="36.300" y="10.600" width="3.800" height="3" fill="#333"/><path d="M38.200 15.500v9.500" stroke="#333" stroke-width="3.800"/></svg>

</div></div>
</body>
</html>
